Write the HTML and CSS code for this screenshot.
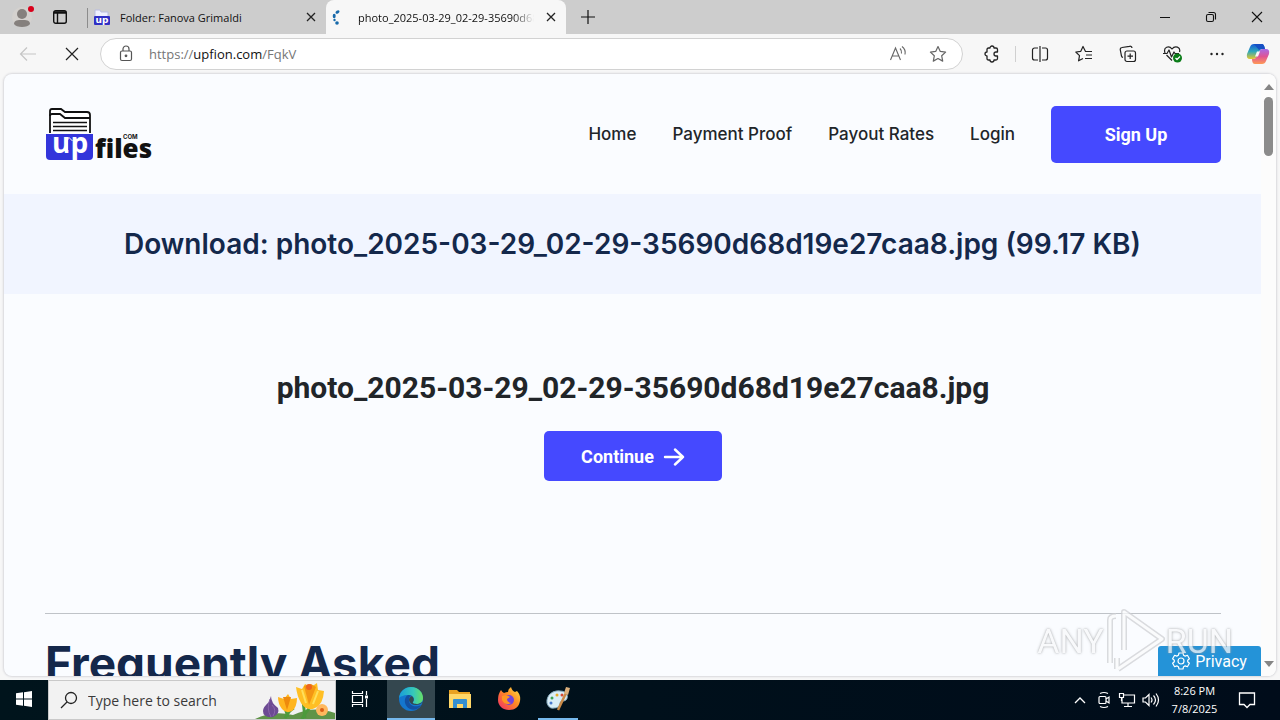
FILE: index.html
```html
<!DOCTYPE html>
<html lang="en">
<head>
<meta charset="utf-8">
<title>photo_2025-03-29_02-29-35690d68d19e27caa8.jpg</title>
<link rel="stylesheet" href="styles.css">
</head>
<body>
<div class="tabstrip">
  <button class="icon-btn profile" aria-label="Profile"><svg width="26" height="26" viewBox="0 0 26 26"><circle cx="12" cy="13" r="10" fill="#d4d1ce"/><circle cx="12" cy="10" r="5" fill="#85807d"/><path d="M4 20c0-4 4-4 8-4s8 0 8 4c-2 4-14 4-16 0z" fill="#85807d"/><circle cx="21" cy="5" r="3" fill="#d9001b"/></svg></button>
  <button class="icon-btn" aria-label="Tab actions"><svg width="16" height="16" viewBox="0 0 16 16" fill="none" stroke="#111" stroke-width="1.4"><rect x="1.7" y="1.7" width="12.6" height="12.6" rx="2"/><path d="M2 3.500h12" stroke-width="2.500"/><path d="M5.500 4v10"/></svg></button>
  <div class="tab">
    <svg class="favicon" width="18" height="18" viewBox="0 0 18 18"><path d="M2 9V2h5l1 2h7v6" fill="#eef0ff" stroke="#b9bce0"/><rect x="1" y="8" width="16" height="9" rx="1" fill="#302fc4"/><text x="9" y="15" class="favicon-text">up</text></svg>
    <span class="tab-title">Folder: Fanova Grimaldi</span>
    <button class="icon-btn" aria-label="Close tab"><svg width="10" height="10" viewBox="0 0 10 10" stroke="#222" stroke-width="1.3"><path d="M1 1l8 8M9 1L1 9"/></svg></button>
  </div>
  <div class="tab tab-active">
    <svg class="spinner" width="14" height="16" viewBox="1 0 14 16" fill="#1769aa"><ellipse cx="6.500" cy="3" rx="2.200" ry="1.500" transform="rotate(-35 6.500 3)"/><ellipse cx="3.200" cy="7" rx="1.500" ry="2.200"/><circle cx="3.500" cy="11" r="1.200"/><circle cx="6" cy="14" r="1.800"/></svg>
    <span class="tab-title tab-fade">photo_2025-03-29_02-29-35690d68d19e27caa8.jpg</span>
    <button class="icon-btn" aria-label="Close tab"><svg width="10" height="10" viewBox="0 0 10 10" stroke="#222" stroke-width="1.3"><path d="M1 1l8 8M9 1L1 9"/></svg></button>
  </div>
  <button class="icon-btn new-tab" aria-label="New tab"><svg width="14" height="14" viewBox="0 0 14 14" stroke="#111" stroke-width="1.2"><path d="M7 0v14M0 7h14"/></svg></button>
  <div class="window-controls">
    <button class="icon-btn" aria-label="Minimize"><svg width="12" height="12" viewBox="0 0 12 12" stroke="#111"><path d="M1 6.500h10"/></svg></button>
    <button class="icon-btn" aria-label="Restore"><svg width="12" height="12" viewBox="0 0 12 12" fill="none" stroke="#111" stroke-width="1.1"><rect x="1.500" y="3.500" width="7" height="7" rx="1.500"/><path d="M3.500 1.500h5a2 2 0 0 1 2 2v5"/></svg></button>
    <button class="icon-btn" aria-label="Close"><svg width="12" height="12" viewBox="0 0 12 12" stroke="#111" stroke-width="1.1"><path d="M1 1l10 10M11 1L1 11"/></svg></button>
  </div>
</div>

<div class="toolbar">
  <button class="icon-btn" aria-label="Back"><svg width="18" height="16" viewBox="0 0 18 16" fill="none" stroke="#c5c5c5" stroke-width="1.2"><path d="M17 8H2M8 1.500L1.500 8 8 14.500"/></svg></button>
  <button class="icon-btn" aria-label="Stop"><svg width="14" height="14" viewBox="0 0 14 14" stroke="#222" stroke-width="1.2"><path d="M1 1l12 12M13 1L1 13"/></svg></button>
  <div class="address">
    <svg width="14" height="18" viewBox="0 0 14 18" fill="none" stroke="#555" stroke-width="1.2"><rect x="1.500" y="6" width="11" height="9.500" rx="1.500"/><path d="M4 6V4a3 3 0 0 1 6 0v2"/><circle cx="7" cy="10.800" r=".8" fill="#555"/></svg>
    <div class="url">https://<b>upfion.com</b>/FqkV</div>
    <button class="icon-btn" aria-label="Read aloud"><svg width="18" height="18" viewBox="0 0 18 18" fill="none" stroke="#666" stroke-width="1.1"><path d="M1.500 15L6.500 3l5 12M3.300 11h6.500M11 3.500q2 2 1.500 5M13 1.500q4 3 3 8"/></svg></button>
    <button class="icon-btn" aria-label="Favorite"><svg width="18" height="18" viewBox="0 0 18 18" fill="none" stroke="#666" stroke-width="1.2" stroke-linejoin="round"><path d="M9 1.500l2.300 4.900 5.300.7-3.900 3.700 1 5.300L9 13.500l-4.700 2.600 1-5.300L1.400 7.100l5.300-.7z"/></svg></button>
  </div>
  <div class="tools">
    <button class="icon-btn" aria-label="Extensions"><svg width="18" height="18" viewBox="0 0 18 18" fill="none" stroke="#222" stroke-width="1.3" stroke-linejoin="round"><path d="M5.500 3H7a2 2 0 0 1 4 0h2q1.500 0 1.500 1.500V7H13a2 2 0 0 0 0 4h1.500v2.500q0 1.500-1.500 1.500h-2a2 2 0 0 1-4 0H5.500Q4 15 4 13.500V11a2 2 0 0 1 0-4V4.500Q4 3 5.500 3z"/></svg></button>
    <span class="divider"></span>
    <button class="icon-btn" aria-label="Split screen"><svg width="18" height="18" viewBox="0 0 18 18" fill="none" stroke="#222" stroke-width="1.2"><path d="M7 3H3.500a2 2 0 0 0-2 2v8a2 2 0 0 0 2 2H7M11 3h3.500a2 2 0 0 1 2 2v8a2 2 0 0 1-2 2H11M9 1v16"/></svg></button>
    <button class="icon-btn" aria-label="Favorites"><svg width="18" height="18" viewBox="0 0 18 18" fill="none" stroke="#222" stroke-width="1.2" stroke-linejoin="round"><path d="M11.500 6.500h-1L8 1.500 5.800 6.300l-5 .7 3.700 3.600-.9 5.200L8 13.500M10 6.500h7M11 10h6M10 13.500h7"/></svg></button>
    <button class="icon-btn" aria-label="Collections"><svg width="18" height="18" viewBox="0 0 18 18" fill="none" stroke="#222" stroke-width="1.2"><rect x="6" y="6" width="10.500" height="10.500" rx="2"/><path d="M11.200 8.500v5.500M8.500 11.200H14M4 12.500a2 2 0 0 1-1.500-1.500L1.300 5A2 2 0 0 1 3 2.500L10.500 1.300A2 2 0 0 1 13 3"/></svg></button>
    <button class="icon-btn" aria-label="Browser essentials"><svg width="20" height="18" viewBox="0 0 20 18" fill="none" stroke="#222" stroke-width="1.2" stroke-linejoin="round"><path d="M2 8C0 2 6 0 9 4c3-4 9-2 7.500 3M3.500 10L9 15.500M0 8.500h4L6 5l2.500 7 2.500-5 1 1.500h4"/><circle cx="14.500" cy="13" r="4.500" fill="#0a7c18" stroke="none"/><path d="M12.500 13l1.500 1.500 3-3" stroke="#fff"/></svg></button>
    <button class="icon-btn" aria-label="Settings and more"><svg width="16" height="16" viewBox="0 0 16 16" fill="#222"><circle cx="2.500" cy="8" r="1.200"/><circle cx="8" cy="8" r="1.200"/><circle cx="13.500" cy="8" r="1.200"/></svg></button>
    <button class="icon-btn" aria-label="Copilot"><svg width="24" height="22" viewBox="0 0 24 22"><defs><linearGradient id="cp1" x2="0" y2="1"><stop stop-color="#155bd8"/><stop offset=".5" stop-color="#2fa8b9"/><stop offset="1" stop-color="#e5c82d"/></linearGradient><linearGradient id="cp2" x2="0" y2="1"><stop stop-color="#a76be8"/><stop offset=".5" stop-color="#e05494"/><stop offset="1" stop-color="#ff9a55"/></linearGradient></defs><path d="M8 1h8q2 0 3 5h-3q-2 0-3 3l-2 5q-1 2-4 2H4q-4 0-3-5l3-7q1-3 4-3z" fill="url(#cp1)"/><path d="M16 21H9q-3 0-3-5h2q2 0 3-3l2-4q1-3 4-3h3q4 0 3 5l-3 7q-1 3-4 3z" fill="url(#cp2)"/><path d="M8 1h8q2 0 3 5h-3q-2 0-3 1z" fill="#1750c4"/><path d="M11 8.500h3l-2 5H9z" fill="#f7f7f7"/></svg></button>
  </div>
</div>

<div class="viewport">
  <div class="page">
    <header class="site-header">
      <a class="logo" href="#" aria-label="UpFiles.com"><svg width="108" height="56" viewBox="0 0 108 56"><path d="M5 27V5q0-2 2-2h9l4 3h22q3 0 3 3v18" fill="#fff" stroke="#111" stroke-width="1.800"/><path d="M5 10q0-2 2-2h8l5 4h25" fill="none" stroke="#111" stroke-width="1.800"/><path d="M8 16.500h34M8 20.500h34M8 24.500h34" stroke="#111" stroke-width="1.500"/><path d="M1 28h47v22q0 4-4 4H5q-4 0-4-4z" fill="#3335db"/><text x="7" y="47" class="logo-up">up</text><path d="M24 44V34" fill="none" stroke="#3335db" stroke-width="1.500"/><path d="M20.500 35L24 31.500l3.500 3.500" fill="none" stroke="#fff"/><text x="50" y="52" class="logo-files">files</text><text x="78" y="33" class="logo-com">COM</text></svg></a>
      <nav class="nav"><a href="#">Home</a><a href="#">Payment Proof</a><a href="#">Payout Rates</a><a href="#">Login</a><a class="signup" href="#">Sign Up</a></nav>
    </header>
    <section class="banner"><h1>Download: photo_2025-03-29_02-29-35690d68d19e27caa8.jpg (99.17 KB)</h1></section>
    <main class="content">
      <section class="download">
        <h2>photo_2025-03-29_02-29-35690d68d19e27caa8.jpg</h2>
        <button class="continue">Continue <svg width="22" height="20" viewBox="0 0 22 20" fill="none" stroke="#fff" stroke-width="2.400" stroke-linecap="round" stroke-linejoin="round"><path d="M2 11h18M12 3.500l8 7.500-8 7.500"/></svg></button>
      </section>
      <h2 class="faq">Frequently Asked</h2>
    </main>
  </div>
  <div class="scrollbar"><span class="arrow-up"></span><span class="thumb"></span><span class="arrow-down"></span></div>
  <button class="privacy"><svg width="18" height="18" viewBox="0 0 18 18" fill="none" stroke="#fff" stroke-width="1.200" stroke-linejoin="round"><path d="M7 1h4l.6 2.300 1.600.8 2.200-.8 2 3.400L15.700 8.200v1.600l1.700 1.500-2 3.400-2.200-.8-1.600.8L11 17H7l-.6-2.300-1.600-.8-2.200.8-2-3.400 1.700-1.500V8.200L.6 6.700l2-3.400 2.200.8 1.600-.8z"/><circle cx="9" cy="9" r="3"/></svg>Privacy</button>
</div>

<div class="watermark"><span>ANY</span><svg width="62" height="66" viewBox="0 0 62 66" fill="none"><g stroke="#cfd0d4" stroke-width="6" stroke-linejoin="round"><path d="M20 42V4l38 27-44 30M6 55V12q0-4 6-4M13 61V50"/></g><g stroke="#fafbfc" stroke-width="3" stroke-linejoin="round"><path d="M20 42V4l38 27-44 30M6 55V12q0-4 6-4M13 61V50"/></g></svg><span>RUN</span></div>

<footer class="taskbar">
  <button class="task" aria-label="Start"><svg width="16" height="16" viewBox="0 0 16 16" fill="#fff"><path d="M0 2.300L7 1.300V7.500H0zM8 1.200L16 0v7.500H8zM0 8.500h7v6.200l-7-1zM8 8.500h8V16l-8-1.200z"/></svg></button>
  <label class="search"><svg width="18" height="18" viewBox="0 0 18 18" fill="none" stroke="#222" stroke-width="1.300"><circle cx="11" cy="7" r="5.500"/><path d="M7 11l-6 6"/></svg><input type="text" placeholder="Type here to search" aria-label="Type here to search">
    <svg class="flowers" width="80" height="38" viewBox="0 0 80 38"><path d="M0 38q18-9 38-4 20-10 42-2v6z" fill="#5f9448"/><path d="M33 36l-4-12M50 37l-2-18M47 38q8-14 12-14M30 37q5-9 9-10" stroke="#4c9a3c" stroke-width="3" fill="none"/><path d="M16 15q0 7 7 12 2 6-5 9-10 1-10-6 0-4 6-9z" fill="#6c4a93"/><path d="M15 18q-4 9 1 18M17 24q5 5 1 11" stroke="#8a66ab" fill="none"/><path d="M23 16l6 2 4-5 3 5 6-1q0 9-5 13-6 3-10-2-4-5-4-12z" fill="#ffb51f"/><path d="M28 16l4 13 4-13" fill="#ee8a0d"/><path d="M41 6l6 2 3-5 6 3 6-4 1 7 6 1q-1 14-9 17-8 4-14-5-4-7-5-16z" fill="#ffbf24"/><path d="M49 5l5 19 7-18-5-3z" fill="#f39613"/><circle cx="54" cy="6" r="3" fill="#ee641d"/><path d="M47 9l4 13M63 10l-5 13" stroke="#ffe05b" stroke-width="2"/><circle cx="67" cy="29" r="6" fill="#ffb85e"/><circle cx="67" cy="29" r="2" fill="#dc5e14"/></svg></label>
  <button class="task task-view" aria-label="Task view"><svg width="18" height="18" viewBox="0 0 18 18" fill="none" stroke="#fff" stroke-width="1.200"><path d="M1.500 1v2.500h10V1M1.500 17v-2.500h10V17M1.500 5.500h10v7h-10zM15.500 1v4M15.500 9v8"/><path d="M14 5.500h3v3h-3z" fill="#fff" stroke="none"/></svg></button>
  <div class="apps">
  <button class="task task-current" aria-label="Microsoft Edge"><svg width="26" height="26" viewBox="0 0 26 26"><defs><linearGradient id="eg" x2="1"><stop stop-color="#189dda"/><stop offset=".6" stop-color="#36c8ba"/><stop offset="1" stop-color="#68df64"/></linearGradient></defs><circle cx="13" cy="13" r="12" fill="#1476cf"/><path d="M1 12C2 5 7 1 13 1c8 0 12 6 12 11 0 4-3 6-7 6-3 0-4-1-3-2 3-4-1-7-5-7-5 0-8 2-9 3z" fill="url(#eg)"/><path d="M10 9c-5 3-4 11 2 14 4 2 9 0 11-4-5 3-13 1-12-6 0-2 1-3 3-3-1-1-3-1-4-1z" fill="#1350a2"/><path d="M14 10q-3 1-3 4 1 5 7 5 3 0 6-2l1-1-5 2c-4 0-6-1-5-2q2-3-1-6z" fill="#34474f"/></svg></button>
  <button class="task" aria-label="File Explorer"><svg width="24" height="22" viewBox="0 0 24 22"><path d="M1 2h8l2 2h11v5H1z" fill="#e9a222"/><path d="M1 6h22v14H1z" fill="#ffd768"/><path d="M5 20v-8q0-1 1-1h12q1 0 1 1v8h-4v-4H9v4z" fill="#348fd0"/></svg></button>
  <button class="task" aria-label="Firefox"><svg width="26" height="26" viewBox="0 0 26 26"><defs><linearGradient id="ff" x1="1" x2="0" y2="1"><stop stop-color="#ffe14b"/><stop offset=".45" stop-color="#ff8b22"/><stop offset="1" stop-color="#f0286c"/></linearGradient></defs><path d="M5 4q1 2 3 3 2-1 4-1 0-3 3-5 1 4 4 5l2-1q4 4 3 10c-1 6-5 9-11 9S2 20 2 14q0-6 3-10z" fill="url(#ff)"/><circle cx="13" cy="14" r="5" fill="#7144db"/><path d="M6 10q5-2 8 1l-3 2q0 3 4 4-6 3-9-3z" fill="#ff9622"/></svg></button>
  <button class="task task-open" aria-label="Paint"><svg width="26" height="26" viewBox="0 0 26 26"><path d="M2 17C1 9 8 4 15 5c7 0 9 6 6 9-3 2-5 0-6 3 0 3-2 5-6 5-4 1-6-2-7-5z" fill="#d9edf7" stroke="#84aabd"/><circle cx="7" cy="12" r="1.500" fill="#3ba454"/><circle cx="12" cy="9" r="1.500" fill="#e6ac27"/><circle cx="17" cy="9" r="1.500" fill="#d54b35"/><circle cx="6" cy="17" r="1.500" fill="#4778ce"/><path d="M13 24l8-17" stroke="#c98a48" stroke-width="2.500"/><path d="M19 7l2-6 4 1-2 7z" fill="#dcb07d"/></svg></button>
  </div>
  <div class="tray">
    <svg width="12" height="8" viewBox="0 0 12 8" fill="none" stroke="#fff" stroke-width="1.300"><path d="M1 7l5-5 5 5"/></svg>
    <svg width="16" height="18" viewBox="-1 0 16 18" fill="none" stroke="#fff" stroke-width="1.200"><rect x="2" y="5.500" width="7" height="7" rx="1"/><path d="M9 8l3-2v6l-3-2M3 2.500q4-2 8 0M3 15.500q4 2 8 0"/></svg>
    <svg width="18" height="16" viewBox="0 0 18 16" fill="none" stroke="#fff" stroke-width="1.200"><path d="M6 3h10.500v8H4V6M10 11v3M6 14.500h8M1.500 1.500h4v4h-4zM3.500 5.500V9"/></svg>
    <svg width="18" height="16" viewBox="0 0 18 16" fill="none" stroke="#fff" stroke-width="1.200"><path d="M1 6h2.500L7 2.500v11L3.500 10H1zM9 5.500q2 2.500 0 5M11.500 3.500q4 4.500 0 9M14 1.500q5 6.500 0 13"/></svg>
    <div class="clock"><span>8:26 PM</span><span>7/8/2025</span></div>
    <svg width="18" height="18" viewBox="0 0 18 18" fill="none" stroke="#fff" stroke-width="1.300"><path d="M1.500 2h15v11.500H12l-3 3-3-3H1.500z"/></svg>
  </div>
</footer>
</body>
</html>
```

FILE: styles.css
```css
* { box-sizing: border-box; }
body { margin: 0; height: 100vh; display: flex; flex-direction: column; overflow: hidden; background: #f7f7f7; font-family: "Open Sans", "Noto Sans", sans-serif; position: relative; }
button { border: 0; background: none; padding: 0; font: inherit; color: inherit; }
svg { flex: none; display: block; }
a { color: inherit; text-decoration: none; }
h1, h2 { margin: 0; }
.icon-btn { display: flex; align-items: center; justify-content: center; flex: none; }

.tabstrip { height: 34px; flex: none; display: flex; align-items: center; background: #cdcdcd; padding-left: 10px; }
.profile { margin-right: 16px; }
.tab { height: 34px; width: 239px; display: flex; align-items: center; gap: 9px; padding: 0 10px 0 6px; margin-left: 19px; font-size: 11px; color: #111; position: relative; }
.tab::before { content: ""; width: 1px; height: 20px; background: #8c8c8c; position: absolute; left: 0; top: 8px; }
.favicon-text { font: 700 9px "DejaVu Sans", sans-serif; fill: #fff; text-anchor: middle; }
.tab-title { flex: 1; white-space: nowrap; overflow: hidden; }
.tab-active { background: #f7f7f7; border-radius: 8px 8px 0 0; margin-left: 0; width: 240px; gap: 12px; }
.tab-active::before { display: none; }
.tab-fade { mask-image: linear-gradient(to right, #000 88%, transparent); }
.new-tab { margin-left: 15px; }
.window-controls { margin-left: auto; display: flex; gap: 34px; padding-right: 17px; }

.toolbar { height: 40px; flex: none; display: flex; align-items: center; padding: 0 10px 0 19px; gap: 28px; }
.address { flex: 1; height: 32px; display: flex; align-items: center; background: #fff; border: 1px solid #d2d2d2; border-radius: 16px; padding: 0 15px 0 18px; gap: 22px; margin-left: -7px; }
.url { flex: 1; font-size: 13px; color: #767676; margin-left: -6px; }
.url b { font-weight: 400; color: #111; }
.tools { display: flex; align-items: center; gap: 26px; margin-left: -8px; }
.tools .icon-btn:last-child { margin-left: -5px; }
.divider { width: 1px; height: 16px; background: #d0d0d0; margin: 0 -11px 0 -12px; }

.viewport { flex: 1; min-height: 0; margin: 0 4px 4px; border-radius: 8px; box-shadow: 0 0 2px 1px #d8d8dc; background: #fafcff; display: flex; overflow: hidden; position: relative; }
.page { flex: 1; min-width: 0; overflow: hidden; font-family: Inter, sans-serif; }
.site-header { height: 120px; display: flex; align-items: center; justify-content: space-between; padding: 0 40px 0 41px; }
.logo-up { font: 700 28px "Open Sans", sans-serif; fill: #fff; }
.logo-files { font: 800 26px "Open Sans", sans-serif; fill: #111; }
.logo-com { font: 700 6px Inter, sans-serif; fill: #111; }
.nav { display: flex; align-items: center; gap: 36px; font-size: 17px; font-weight: 500; color: #212529; }
.signup { width: 170px; height: 57px; display: flex; align-items: center; justify-content: center; border-radius: 5px; background: #4549ff; color: #fff; font: 700 18px Roboto, sans-serif; }
.banner { background: #f1f5ff; padding: 33px 20px; text-align: center; color: #14284b; }
.banner h1 { font-size: 28px; line-height: 34px; font-weight: 600; white-space: nowrap; }
.content { padding: 0 40px 0 41px; }
.download { height: 320px; padding-top: 76px; border-bottom: 1px solid #bfc3c8; display: flex; flex-direction: column; align-items: center; gap: 25px; }
.download h2 { font: 700 30px/36px Roboto, sans-serif; color: #212529; white-space: nowrap; }
.continue { display: flex; align-items: center; justify-content: center; gap: 9px; width: 178px; height: 50px; border-radius: 5px; background: #4549ff; color: #fff; font: 700 18px Roboto, sans-serif; }
.faq { padding-top: 20px; font-size: 46px; line-height: 58px; font-weight: 700; color: #14284b; }
.scrollbar { width: 15px; flex: none; display: flex; flex-direction: column; align-items: center; padding: 10px 0 9px; background: #fcfcfc; }
.arrow-up, .arrow-down { border: 5px solid transparent; border-top: 0; border-bottom: 6px solid #858585; }
.arrow-down { margin-top: auto; border-bottom: 0; border-top: 6px solid #858585; }
.thumb { width: 9px; height: 59px; margin-top: 7px; border-radius: 5px; background: #8b8b8b; }
.privacy { position: absolute; right: 15px; bottom: 0; width: 103px; height: 30px; display: flex; align-items: center; justify-content: center; gap: 5px; border-radius: 3px 3px 0 0; background: #2493d8; color: #fff; font: 400 16px Roboto, sans-serif; }
.watermark { position: absolute; right: 47px; bottom: 46px; display: flex; align-items: center; font: 400 34px Roboto, sans-serif; color: #f8f9fa; text-shadow: 0 0 3px #95979a, 0 0 1px #b5b7ba; opacity: .75; pointer-events: none; }

.taskbar { height: 40px; flex: none; display: flex; background: linear-gradient(to right, #00141c, #000c1a); color: #fff; }
.task { width: 48px; display: flex; align-items: center; justify-content: center; border-bottom: 2px solid transparent; }
.task-view { margin-right: 3px; }
.apps { display: flex; gap: 1px; }
.task-current { background: #34474f; border-color: #76b9ed; }
.task-open { width: 40px; margin-left: 4px; border-color: #76b9ed; }
.search { width: 288px; display: flex; align-items: center; gap: 8px; padding-left: 11px; background: #f2f2f2; border: 1px solid #c9c9c9; }
.search input { flex: 1; min-width: 0; border: 0; background: none; font: 400 14px "Open Sans", sans-serif; }
.search input::placeholder { color: #3a3a3a; opacity: 1; }
.flowers { align-self: flex-end; margin-left: -10px; }
.tray { margin-left: auto; display: flex; align-items: center; gap: 6px; padding-right: 24px; }
.tray svg:nth-child(2) { margin-left: 4px; }
.clock { display: flex; flex-direction: column; align-items: center; font-size: 11px; line-height: 18px; width: 53px; margin: 0 11px 0 2px; white-space: nowrap; }
```
